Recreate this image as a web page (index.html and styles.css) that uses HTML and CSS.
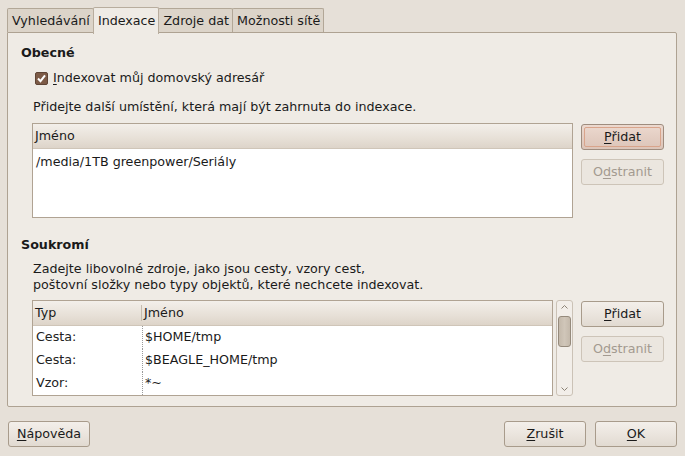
FILE: index.html
```html
<!DOCTYPE html>
<html lang="cs">
<head>
<meta charset="utf-8">
<link rel="stylesheet" href="styles.css">
</head>
<body>
<div class="dialog">
  <div class="tabs">
    <div class="tab">Vyhledávání</div>
    <div class="tab active">Indexace</div>
    <div class="tab">Zdroje dat</div>
    <div class="tab">Možnosti sítě</div>
  </div>
  <div class="page">
    <div class="title t1">Obecné</div>
    <label class="check">
      <span class="box"><svg width="13" height="13" viewBox="0 0 13 13"><path d="M3 6.5 L5.5 9.2 L10 3.3" fill="none" stroke="#fff" stroke-width="2"/></svg></span>
      <span><u>I</u>ndexovat můj domovský adresář</span>
    </label>
    <div class="desc d1">Přidejte další umístění, která mají být zahrnuta do indexace.</div>
    <div class="row r1">
      <div class="list list1">
        <div class="head"><div class="hcell">Jméno</div></div>
        <div class="body">
          <div class="item">/media/1TB greenpower/Seriály</div>
        </div>
      </div>
      <div class="btns">
        <button class="btn default"><span><u>P</u>řidat</span></button>
        <button class="btn disabled">O<u>d</u>stranit</button>
      </div>
    </div>
    <div class="title t2">Soukromí</div>
    <div class="desc d2">Zadejte libovolné zdroje, jako jsou cesty, vzory cest,<br>poštovní složky nebo typy objektů, které nechcete indexovat.</div>
    <div class="row r2">
      <div class="list list2">
        <div class="head">
          <div class="hcell c1">Typ</div>
          <div class="hcell c2">Jméno</div>
        </div>
        <div class="body grid">
          <div class="cell c1">Cesta:</div><div class="cell c2">$HOME/tmp</div>
          <div class="cell c1">Cesta:</div><div class="cell c2">$BEAGLE_HOME/tmp</div>
          <div class="cell c1">Vzor:</div><div class="cell c2">*~</div>
        </div>
      </div>
      <div class="scroll">
        <svg class="arrow" width="9" height="6" viewBox="0 0 9 6"><path d="M1.5 4.5 L4.5 1.5 L7.5 4.5" fill="none" stroke="#8c8376" stroke-width="1"/></svg>
        <div class="thumb"></div>
        <div class="spacer"></div>
        <svg class="arrow" width="9" height="6" viewBox="0 0 9 6"><path d="M1.5 1.5 L4.5 4.5 L7.5 1.5" fill="none" stroke="#8c8376" stroke-width="1"/></svg>
      </div>
      <div class="btns">
        <button class="btn"><u>P</u>řidat</button>
        <button class="btn disabled">O<u>d</u>stranit</button>
      </div>
    </div>
  </div>
  <div class="footer">
    <button class="btn"><u>N</u>ápověda</button>
    <div class="grow"></div>
    <button class="btn"><u>Z</u>rušit</button>
    <button class="btn"><u>O</u>K</button>
  </div>
</div>
</body>
</html>
```

FILE: styles.css
```css
* { box-sizing: border-box; }
html, body {
  margin: 0;
  padding: 0;
  width: 685px;
  height: 456px;
  overflow: hidden;
  background: #e6e0d8;
  font-family: "DejaVu Sans", sans-serif;
  font-size: 12.7px;
  color: #1a1a1a;
}
u { text-decoration: underline; text-underline-offset: 2px; }
.dialog {
  padding: 7px 8px 0 7px;
}
.tabs {
  display: flex;
  align-items: flex-end;
  height: 26px;
  position: relative;
  z-index: 1;
}
.tab {
  height: 24px;
  line-height: 23px;
  padding: 0 3px 0 4px;
  background: #dcd4c9;
  border: 1px solid #b2a797;
  border-bottom: none;
  border-radius: 2px 2px 0 0;
  margin-bottom: 1px;
  margin-right: -1px;
  color: #1a1a1a;
}
.tab.active {
  height: 27px;
  line-height: 25px;
  background: #efebe5;
  margin-bottom: -1px;
  border-color: #b8ad9e;
  position: relative;
  z-index: 2;
}
.page {
  height: 375px;
  background: #efebe5;
  border: 1px solid #aea292;
  border-radius: 0 2px 2px 2px;
  padding: 0 12px 0 13px;
  margin-top: -1px;
}
.title {
  font-weight: bold;
  line-height: 16px;
}
.t1 { margin-top: 12px; }
.t2 { margin-top: 19px; }
.check {
  display: flex;
  align-items: center;
  gap: 5px;
  margin: 9px 0 0 14px;
  line-height: 16px;
}
.box {
  width: 13px;
  height: 13px;
  border-radius: 2px;
  background: #7d5b47;
  border: 1px solid #5f4536;
  display: flex;
}
.box svg { margin: -1px; }
.desc {
  line-height: 16px;
  margin-left: 12px;
}
.d1 { margin-top: 13px; }
.d2 { margin-top: 8px; }
.row {
  display: flex;
  align-items: flex-start;
  margin-left: 11px;
}
.r1 { margin-top: 8px; }
.r2 { margin-top: 7px; }
.list {
  border: 1px solid #b0a393;
  background: #fff;
}
.list1 { width: 541px; height: 95px; }
.list2 { width: 521px; height: 96px; }
.head {
  display: flex;
  height: 25px;
  background: linear-gradient(#f3efea, #e7e0d7 60%, #ddd4c9);
  border-bottom: 1px solid #cfc5b8;
}
.hcell {
  line-height: 24px;
  padding-left: 2px;
}
.list2 .head .c1 { width: 109px; border-right: 1px solid #c6bcae; margin: 4px 0; line-height: 16px; }
.list2 .head .c2 { line-height: 24px; }
.item {
  padding-left: 3px;
  padding-top: 2px;
  line-height: 22px;
}
.grid {
  display: grid;
  grid-template-columns: 110px 1fr;
  grid-auto-rows: 23px;
  position: relative;
}
.cell {
  line-height: 22px;
  padding-left: 3px;
}
.cell.c1 { border-right: 1px dotted #9a9a9a; color: #222; }
.cell.c2 { padding-left: 2px; }
.scroll {
  width: 17px;
  height: 96px;
  margin-left: 3px;
  border: 1px solid #cbc2b6;
  border-radius: 3px;
  background: #f2eee9;
  display: flex;
  flex-direction: column;
  align-items: center;
  padding: 3px 0 3px;
}
.arrow { flex: none; }
.thumb {
  width: 13px;
  height: 31px;
  margin-top: 6px;
  border: 1px solid #958a7c;
  border-radius: 3px;
  background: linear-gradient(90deg, #c4b9ab, #d0c6b9 50%, #c4b9ab);
}
.spacer { flex: 1; }
.btns {
  display: flex;
  flex-direction: column;
  gap: 9px;
  margin-left: 8px;
  margin-top: 1px;
}
.r1 .btns { margin-top: 1px; }
.btn {
  width: 83px;
  height: 26px;
  border: 1px solid #a89b8b;
  border-radius: 3px;
  background: linear-gradient(#f3efea, #ebe5de 50%, #e1dad1);
  font-family: inherit;
  font-size: inherit;
  color: #1a1a1a;
  padding: 0;
  line-height: 22px;
  text-align: center;
}
.btn.default {
  background: linear-gradient(#ecd9cf, #e4cec3 50%, #dcc5b9);
  border-color: #9e8c7e;
  padding: 2px;
}
.btn.default span {
  display: block;
  height: 20px;
  line-height: 18px;
  border: 1px solid #d9a48b;
  border-radius: 2px;
}
.btn.disabled {
  color: #a39a90;
  border-color: #cdc4b8;
  background: #ebe6df;
}
.footer {
  display: flex;
  margin-top: 14px;
  padding-left: 1px;
  gap: 9px;
}
.footer .btn { width: 82px; }
.grow { flex: 1; }
```
